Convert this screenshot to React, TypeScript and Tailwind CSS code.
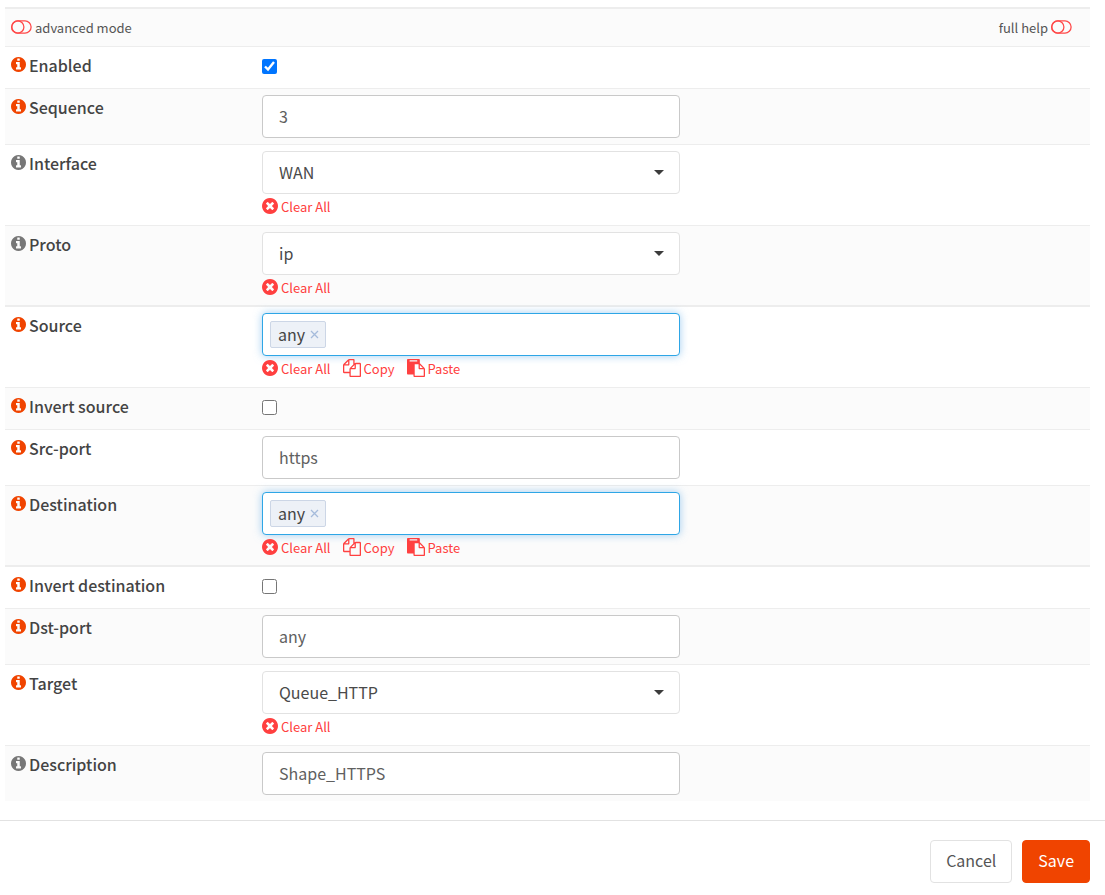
import { useState } from "react";
import type { ReactNode } from "react";

const paths = {
  info: "M1152 1376v-160q0-14-9-23t-23-9h-96v-512q0-14-9-23t-23-9h-320q-14 0-23 9t-9 23v160q0 14 9 23t23 9h96v320h-96q-14 0-23 9t-9 23v160q0 14 9 23t23 9h448q14 0 23-9t9-23zm-128-896v-160q0-14-9-23t-23-9h-192q-14 0-23 9t-9 23v160q0 14 9 23t23 9h192q14 0 23-9t9-23zm640 416q0 209-103 385.5t-279.5 279.5-385.5 103-385.5-103-279.5-279.5-103-385.5 103-385.5 279.5-279.5 385.5-103 385.5 103 279.5 279.5 103 385.5z",
  clear: "M1277 1122q0-26-19-45l-181-181 181-181q19-19 19-45 0-27-19-46l-90-90q-19-19-46-19-26 0-45 19l-181 181-181-181q-19-19-45-19-27 0-46 19l-90 90q-19 19-19 46 0 26 19 45l181 181-181 181q-19 19-19 45 0 27 19 46l90 90q19 19 46 19 26 0 45-19l181-181 181 181q19 19 45 19 27 0 46-19l90-90q19-19 19-46zm387-226q0 209-103 385.5t-279.5 279.5-385.5 103-385.5-103-279.5-279.5-103-385.5 103-385.5 279.5-279.5 385.5-103 385.5 103 279.5 279.5 103 385.5z",
  copy: "M1696 384q40 0 68 28t28 68v1216q0 40-28 68t-68 28h-960q-40 0-68-28t-28-68v-288h-544q-40 0-68-28t-28-68v-672q0-40 20-88t48-76l408-408q28-28 76-48t88-20h416q40 0 68 28t28 68v328q68-40 128-40h416zm-544 213l-299 299h299v-299zm-640-384l-299 299h299v-299zm196 647l316-316v-416h-384v416q0 40-28 68t-68 28h-416v640h512v-256q0-40 20-88t48-76zm956 804v-1152h-384v416q0 40-28 68t-68 28h-416v640h896z",
  paste: "M768 1664h896v-640h-416q-40 0-68-28t-28-68v-416h-384v1152zm256-1440v-64q0-13-9.5-22.5t-22.5-9.5h-704q-13 0-22.5 9.5t-9.5 22.5v64q0 13 9.5 22.5t22.5 9.5h704q13 0 22.5-9.5t9.5-22.5zm256 672h299l-299-299v299zm512 128v672q0 40-28 68t-68 28h-960q-40 0-68-28t-28-68v-160h-544q-40 0-68-28t-28-68v-1344q0-40 28-68t68-28h1088q40 0 68 28t28 68v328q21 13 36 28l408 408q28 28 48 76t20 88z",
};

function InfoIcon() {
  return (
    <svg viewBox="128 128 1536 1536" className="size-[15px] shrink-0 fill-current" aria-hidden="true">
      <path d={paths.info} />
    </svg>
  );
}

function ClearIcon() {
  return (
    <svg viewBox="128 128 1536 1536" className="size-4 shrink-0 fill-current" aria-hidden="true">
      <path d={paths.clear} />
    </svg>
  );
}

function PageIcon({ d }: { d: string }) {
  return (
    <svg viewBox="0 0 1792 1792" className="size-[18px] shrink-0 fill-current" aria-hidden="true">
      <path d={d} />
    </svg>
  );
}

function ToggleOff() {
  return (
    <svg viewBox="0 0 21 14" className="h-[14px] w-[21px] shrink-0 fill-none stroke-[#ff4a4a]" strokeWidth="1.3" aria-hidden="true">
      <rect x="0.7" y="0.9" width="19.4" height="12.2" rx="6.1" />
      <circle cx="6.8" cy="7" r="6.1" />
    </svg>
  );
}

type Field = {
  id: string;
  label: string;
  kind: "check" | "text" | "select" | "tokens";
  value?: string;
  checked?: boolean;
  noHelp?: boolean;
};

const groups: Field[][] = [
  [
    { id: "enabled", label: "Enabled", kind: "check", checked: true },
    { id: "sequence", label: "Sequence", kind: "text", value: "3" },
    { id: "interface", label: "Interface", kind: "select", value: "WAN", noHelp: true },
    { id: "proto", label: "Proto", kind: "select", value: "ip", noHelp: true },
  ],
  [
    { id: "source", label: "Source", kind: "tokens", value: "any" },
    { id: "source_not", label: "Invert source", kind: "check" },
    { id: "src_port", label: "Src-port", kind: "text", value: "https" },
    { id: "destination", label: "Destination", kind: "tokens", value: "any" },
  ],
  [
    { id: "destination_not", label: "Invert destination", kind: "check" },
    { id: "dst_port", label: "Dst-port", kind: "text", value: "any" },
    { id: "target", label: "Target", kind: "select", value: "Queue_HTTP" },
    { id: "description", label: "Description", kind: "text", value: "Shape_HTTPS", noHelp: true },
  ],
];

function ActionLink({ icon, children, onClick }: { icon: ReactNode; children: ReactNode; onClick?: () => void }) {
  return (
    <a
      href="#"
      onClick={(e) => {
        e.preventDefault();
        onClick?.();
      }}
      className="flex items-center gap-[3px] text-[#ff4040]"
    >
      {icon}
      <span className="pt-0.5">{children}</span>
    </a>
  );
}

function SelectControl({ field }: { field: Field }) {
  const [value, setValue] = useState(field.value ?? "");
  return (
    <>
      <div className="grid items-center">
        <select
          id={field.id}
          value={value}
          onChange={(e) => setValue(e.target.value)}
          className="col-start-1 row-start-1 h-[43px] w-full appearance-none rounded-[4px] border border-[#e2e2e2] bg-white px-4 pr-10 pb-0.5 text-[#4a4a4a]"
        >
          <option value=""></option>
          <option value={field.value}>{field.value}</option>
        </select>
        <svg viewBox="0 0 10 5" className="pointer-events-none col-start-1 row-start-1 mr-4 h-[5px] w-[10px] justify-self-end fill-[#3c3c3c]" aria-hidden="true">
          <path d="M0 0h10L5 5z" />
        </svg>
      </div>
      <div className="flex h-[25px] items-center pb-0.5 text-[13px]">
        <ActionLink icon={<ClearIcon />} onClick={() => setValue("")}>Clear All</ActionLink>
      </div>
    </>
  );
}

function TokenControl({ field }: { field: Field }) {
  const [tokens, setTokens] = useState([field.value ?? ""]);
  return (
    <>
      <div className="flex h-[43px] items-center rounded-[4px] border border-[#2ea6e6] bg-white px-[7px] shadow-[0_0_8px_rgba(102,175,233,0.6)]">
        {tokens.map((t) => (
          <span key={t} className="flex h-[27px] items-center gap-[5px] rounded-xs border border-[#ccd6e6] bg-[#edf1f7] pr-1.5 pl-[7px] text-[#444]">
            <span className="pb-0.5">{t}</span>
            <button type="button" aria-label={`Remove ${t}`} onClick={() => setTokens([])} className="text-[#a5bbdb]">
              <svg viewBox="0 0 9 9" className="size-[9px] fill-none stroke-current" strokeWidth="1.3" aria-hidden="true">
                <path d="M1 1l7 7M8 1l-7 7" />
              </svg>
            </button>
          </span>
        ))}
        <input id={field.id} type="text" className="min-w-0 flex-1 bg-transparent px-2 outline-none" />
      </div>
      <div className="flex h-[25px] items-center gap-3 pb-0.5 text-[13px]">
        <ActionLink icon={<ClearIcon />} onClick={() => setTokens([])}>Clear All</ActionLink>
        <ActionLink icon={<PageIcon d={paths.copy} />}>Copy</ActionLink>
        <ActionLink icon={<PageIcon d={paths.paste} />}>Paste</ActionLink>
      </div>
    </>
  );
}

function Control({ field }: { field: Field }) {
  if (field.kind === "select") return <SelectControl field={field} />;
  if (field.kind === "tokens") return <TokenControl field={field} />;
  if (field.kind === "check")
    return (
      <div className="flex h-[29px] items-center pb-[3px]">
        <input id={field.id} type="checkbox" defaultChecked={field.checked} className="size-[15px] accent-[#0075ff]" />
      </div>
    );
  return (
    <input
      id={field.id}
      type="text"
      defaultValue={field.value}
      className="block h-[43px] w-full rounded-[4px] border border-[#c9c9c9] bg-white px-4 pb-0.5 text-[#606060]"
    />
  );
}

function Row({ field }: { field: Field }) {
  return (
    <div className="grid grid-cols-[251fr_430fr_404fr] border-t border-[#ededed] pt-1.5 pb-1.5 even:bg-[#fbfbfb]">
      <div className="flex h-[23px] items-center gap-[3px] px-1.5 font-medium text-[#444]">
        <span className={field.noHelp ? "text-[#777]" : "text-[#f04400]"}>
          <InfoIcon />
        </span>
        <label htmlFor={field.id}>{field.label}</label>
      </div>
      <div className="px-1.5">
        <Control field={field} />
      </div>
    </div>
  );
}

export default function App() {
  return (
    <form onSubmit={(e) => e.preventDefault()} className="bg-white pt-[7px] font-['Noto_Sans_CJK_SC','Noto_Sans',sans-serif] text-[16px] leading-6 text-[#555]">
      <div className="mr-[15px] ml-[5px]">
        <div className="flex h-[39px] items-center justify-between border-t-2 border-[#ededed] bg-[#fbfbfb] pr-[18px] pb-0.5 pl-1.5 text-[13px]">
          <button type="button" className="flex items-center gap-[3px]">
            <ToggleOff />
            <span className="pt-0.5">advanced mode</span>
          </button>
          <button type="button" className="flex items-center gap-[3px]">
            <span className="pt-0.5">full help</span>
            <ToggleOff />
          </button>
        </div>
        {groups.map((fields, i) => (
          <div key={i} className={i > 0 ? "-mt-px border-t border-[#ededed]" : ""}>
            {fields.map((f) => (
              <Row key={f.id} field={f} />
            ))}
          </div>
        ))}
      </div>
      <div className="mt-[19px] flex justify-end gap-2.5 border-t border-[#e2e2e2] pt-[19px] pr-[15px] pb-3">
        <button type="button" className="h-[43px] rounded-[4px] border border-[#e2e2e2] bg-white px-[15px] pb-[3px] text-[#555]">
          Cancel
        </button>
        <button type="submit" className="h-[43px] rounded-[4px] border border-[#f04400] bg-[#f04400] px-[15px] pb-[3px] text-white">
          Save
        </button>
      </div>
    </form>
  );
}
